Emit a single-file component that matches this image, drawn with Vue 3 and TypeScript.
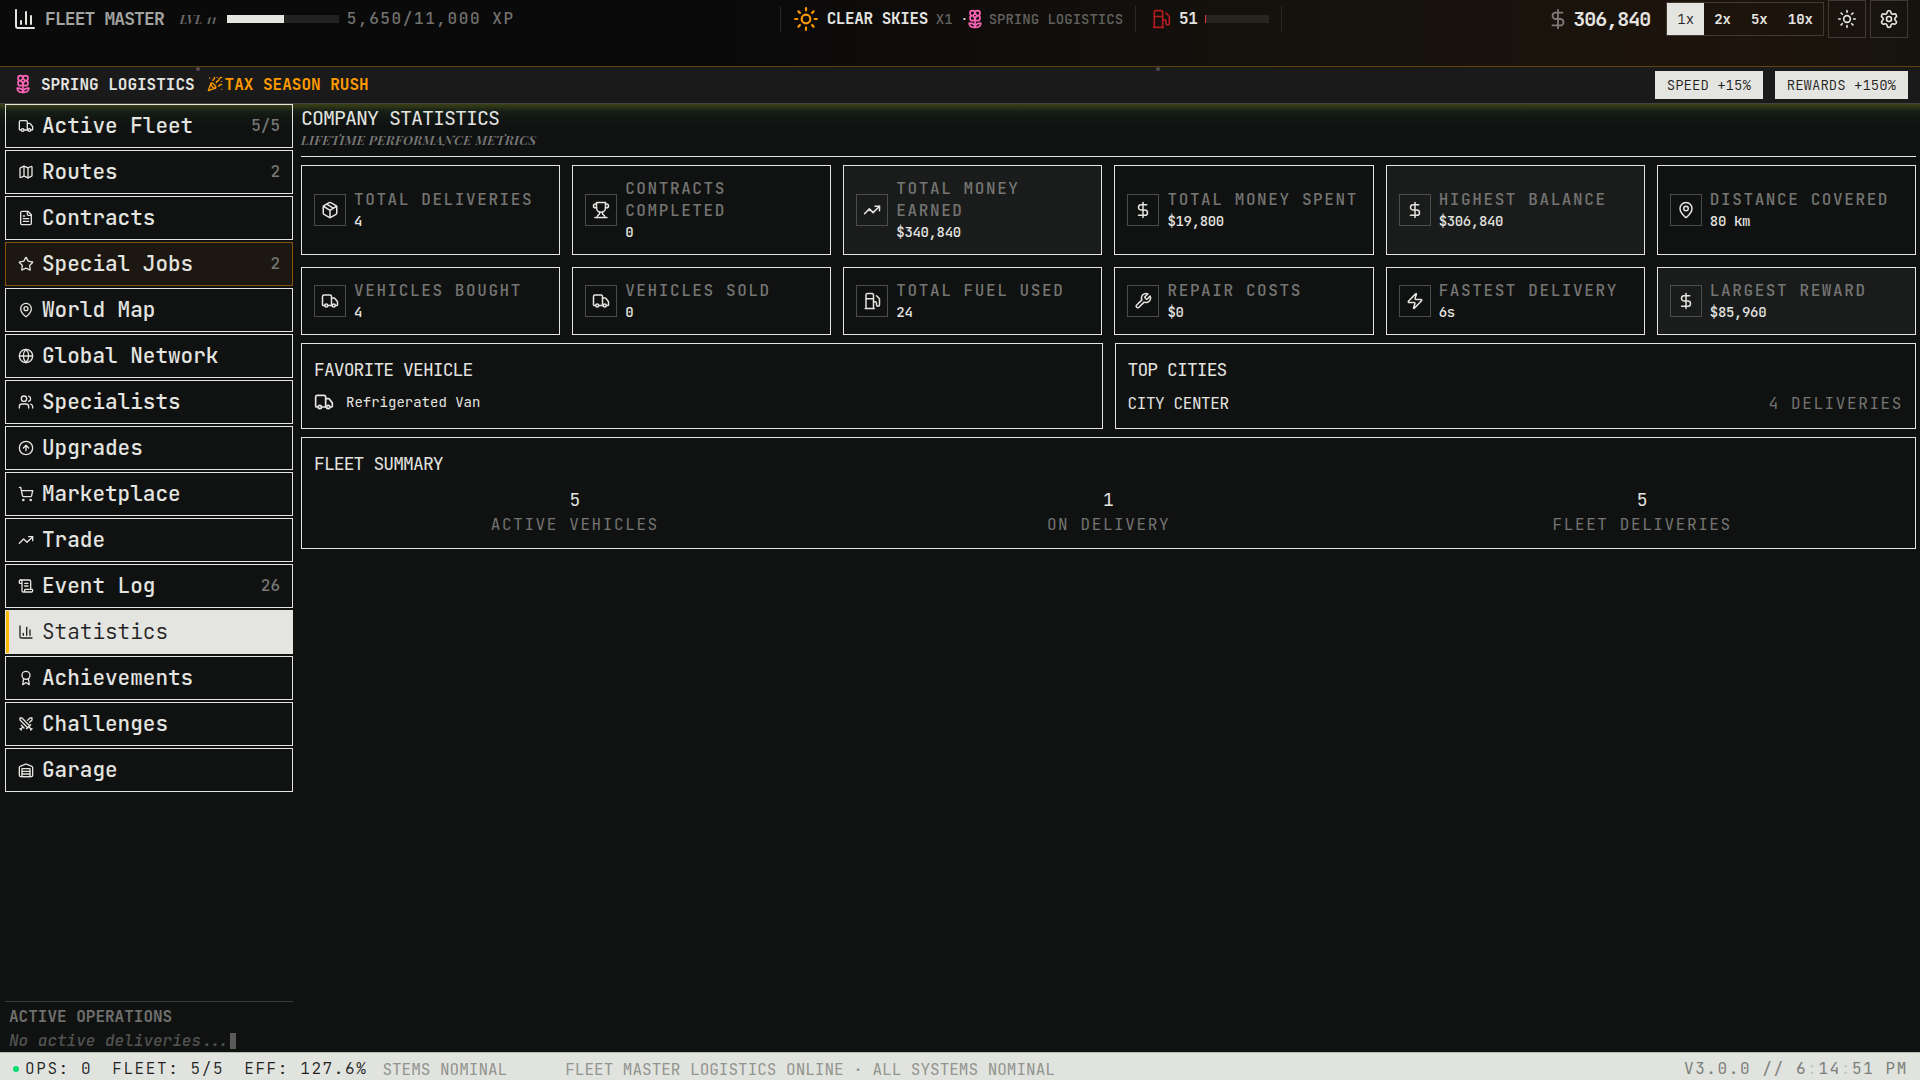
<script setup lang="ts">
import { h, ref, type FunctionalComponent } from 'vue'

const icons: Record<string, string[]> = {
  truck: [
    'M14 18V6a2 2 0 0 0-2-2H4a2 2 0 0 0-2 2v11a1 1 0 0 0 1 1h2',
    'M15 18H9',
    'M19 18h2a1 1 0 0 0 1-1v-3.65a1 1 0 0 0-.22-.624l-3.48-4.35A1 1 0 0 0 17.52 8H14',
    'M15 18a2 2 0 1 0 4 0a2 2 0 1 0-4 0',
    'M5 18a2 2 0 1 0 4 0a2 2 0 1 0-4 0',
  ],
  map: [
    'M14.106 5.553a2 2 0 0 0 1.788 0l3.659-1.83A1 1 0 0 1 21 4.619v12.764a1 1 0 0 1-.553.894l-4.553 2.277a2 2 0 0 1-1.788 0l-4.212-2.106a2 2 0 0 0-1.788 0l-3.659 1.83A1 1 0 0 1 3 19.381V6.618a1 1 0 0 1 .553-.894l4.553-2.277a2 2 0 0 1 1.788 0z',
    'M15 5.764v15',
    'M9 3.236v15',
  ],
  file: [
    'M15 2H6a2 2 0 0 0-2 2v16a2 2 0 0 0 2 2h12a2 2 0 0 0 2-2V7Z',
    'M14 2v4a2 2 0 0 0 2 2h4',
    'M10 9H8',
    'M16 13H8',
    'M16 17H8',
  ],
  star: [
    'M11.525 2.295a.53.53 0 0 1 .95 0l2.31 4.679a2.123 2.123 0 0 0 1.595 1.16l5.166.756a.53.53 0 0 1 .294.904l-3.736 3.638a2.123 2.123 0 0 0-.611 1.878l.882 5.14a.53.53 0 0 1-.771.56l-4.618-2.428a2.122 2.122 0 0 0-1.973 0L6.396 21.01a.53.53 0 0 1-.77-.56l.881-5.139a2.122 2.122 0 0 0-.611-1.879L2.16 9.795a.53.53 0 0 1 .294-.906l5.165-.755a2.122 2.122 0 0 0 1.597-1.16z',
  ],
  pin: [
    'M20 10c0 4.993-5.539 10.193-7.399 11.799a1 1 0 0 1-1.202 0C9.539 20.193 4 14.993 4 10a8 8 0 0 1 16 0',
    'M9 10a3 3 0 1 0 6 0a3 3 0 1 0-6 0',
  ],
  globe: [
    'M2 12a10 10 0 1 0 20 0a10 10 0 1 0-20 0',
    'M12 2a14.5 14.5 0 0 0 0 20 14.5 14.5 0 0 0 0-20',
    'M2 12h20',
  ],
  users: [
    'M16 21v-2a4 4 0 0 0-4-4H6a4 4 0 0 0-4 4v2',
    'M5 7a4 4 0 1 0 8 0a4 4 0 1 0-8 0',
    'M22 21v-2a4 4 0 0 0-3-3.87',
    'M16 3.13a4 4 0 0 1 0 7.75',
  ],
  arrowUp: ['M2 12a10 10 0 1 0 20 0a10 10 0 1 0-20 0', 'm16 12-4-4-4 4', 'M12 16V8'],
  cart: [
    'M7 21a1 1 0 1 0 2 0a1 1 0 1 0-2 0',
    'M18 21a1 1 0 1 0 2 0a1 1 0 1 0-2 0',
    'M2.05 2.05h2l2.66 12.42a2 2 0 0 0 2 1.58h9.78a2 2 0 0 0 1.95-1.57l1.65-7.43H5.12',
  ],
  trend: ['M22 7 13.5 15.5 8.5 10.5 2 17', 'M16 7h6v6'],
  scroll: [
    'M15 12h-5',
    'M15 8h-5',
    'M19 17V5a2 2 0 0 0-2-2H4',
    'M8 21h12a2 2 0 0 0 2-2v-1a1 1 0 0 0-1-1H11a1 1 0 0 0-1 1v1a2 2 0 1 1-4 0V5a2 2 0 1 0-4 0v2a1 1 0 0 0 1 1h3',
  ],
  chart: ['M3 3v16a2 2 0 0 0 2 2h16', 'M18 17V9', 'M13 17V5', 'M8 17v-3'],
  award: [
    'm15.477 12.89 1.515 8.526a.5.5 0 0 1-.81.47l-3.58-2.687a1 1 0 0 0-1.197 0l-3.586 2.686a.5.5 0 0 1-.81-.469l1.514-8.526',
    'M6 8a6 6 0 1 0 12 0a6 6 0 1 0-12 0',
  ],
  swords: [
    'M14.5 17.5 3 6V3h3l11.5 11.5',
    'M13 19l6-6',
    'M16 16l4 4',
    'M19 21l2-2',
    'M14.5 6.5 18 3h3v3l-3.5 3.5',
    'M5 14l4 4',
    'M7 17l-3 3',
    'M3 19l2 2',
  ],
  warehouse: [
    'M22 8.35V20a2 2 0 0 1-2 2H4a2 2 0 0 1-2-2V8.35A2 2 0 0 1 3.26 6.5l8-3.2a2 2 0 0 1 1.48 0l8 3.2A2 2 0 0 1 22 8.35Z',
    'M6 18h12',
    'M6 14h12',
    'M6 10h12v12H6z',
  ],
  box: [
    'M11 21.73a2 2 0 0 0 2 0l7-4A2 2 0 0 0 21 16V8a2 2 0 0 0-1-1.73l-7-4a2 2 0 0 0-2 0l-7 4A2 2 0 0 0 3 8v8a2 2 0 0 0 1 1.73z',
    'M12 22V12',
    'm3.3 7 7.703 4.734a2 2 0 0 0 1.994 0L20.7 7',
    'm7.5 4.27 9 5.15',
  ],
  trophy: [
    'M6 9H4.5a2.5 2.5 0 0 1 0-5H6',
    'M18 9h1.5a2.5 2.5 0 0 0 0-5H18',
    'M4 22h16',
    'M10 14.66V17c0 .55-.47.98-.97 1.21C7.85 18.75 7 20.24 7 22',
    'M14 14.66V17c0 .55.47.98.97 1.21C16.15 18.75 17 20.24 17 22',
    'M18 2H6v7a6 6 0 0 0 12 0V2Z',
  ],
  dollar: ['M12 2v20', 'M17 5H9.5a3.5 3.5 0 0 0 0 7h5a3.5 3.5 0 0 1 0 7H6'],
  fuel: [
    'M3 22h12',
    'M4 9h10',
    'M14 22V4a2 2 0 0 0-2-2H6a2 2 0 0 0-2 2v18',
    'M14 13h2a2 2 0 0 1 2 2v2a2 2 0 0 0 2 2a2 2 0 0 0 2-2V9.83a2 2 0 0 0-.59-1.42L18 5',
  ],
  wrench: [
    'M14.7 6.3a1 1 0 0 0 0 1.4l1.6 1.6a1 1 0 0 0 1.4 0l3.77-3.77a6 6 0 0 1-7.94 7.94l-6.91 6.91a2.12 2.12 0 0 1-3-3l6.91-6.91a6 6 0 0 1 7.94-7.94l-3.76 3.76z',
  ],
  zap: [
    'M4 14a1 1 0 0 1-.78-1.63l9.9-10.2a.5.5 0 0 1 .86.46l-1.92 6.02A1 1 0 0 0 13 10h7a1 1 0 0 1 .78 1.63l-9.9 10.2a.5.5 0 0 1-.86-.46l1.92-6.02A1 1 0 0 0 11 14z',
  ],
  sun: [
    'M8 12a4 4 0 1 0 8 0a4 4 0 1 0-8 0',
    'M12 2v2',
    'M12 20v2',
    'm4.93 4.93 1.41 1.41',
    'm17.66 17.66 1.41 1.41',
    'M2 12h2',
    'M20 12h2',
    'm6.34 17.66-1.41 1.41',
    'm19.07 4.93-1.41 1.41',
  ],
  gear: [
    'M9.671 4.136a2.34 2.34 0 0 1 4.659 0 2.34 2.34 0 0 0 3.319 1.915 2.34 2.34 0 0 1 2.33 4.033 2.34 2.34 0 0 0 0 3.831 2.34 2.34 0 0 1-2.33 4.033 2.34 2.34 0 0 0-3.319 1.915 2.34 2.34 0 0 1-4.659 0 2.34 2.34 0 0 0-3.32-1.915 2.34 2.34 0 0 1-2.33-4.033 2.34 2.34 0 0 0 0-3.831A2.34 2.34 0 0 1 6.35 6.051a2.34 2.34 0 0 0 3.319-1.915',
    'M9 12a3 3 0 1 0 6 0a3 3 0 1 0-6 0',
  ],
  flower: [
    'M12 5a3 3 0 1 1 3 3m-3-3a3 3 0 1 0-3 3m3-3v1M9 8a3 3 0 1 0 3 3M9 8h1m5 0a3 3 0 1 1-3 3m3-3h-1m-2 3v-1',
    'M10 8a2 2 0 1 0 4 0a2 2 0 1 0-4 0',
    'M12 10v12',
    'M12 22c4.2 0 7-1.667 7-5-4.2 0-7 1.667-7 5Z',
    'M12 22c-4.2 0-7-1.667-7-5 4.2 0 7 1.667 7 5Z',
  ],
  party: [
    'M5.8 11.3 2 22l10.7-3.79',
    'M4 3h.01',
    'M22 8h.01',
    'M15 2h.01',
    'M22 20h.01',
    'm22 2-2.24.75a2.9 2.9 0 0 0-1.96 3.12c.1.86-.57 1.63-1.45 1.63h-.38c-.86 0-1.6.6-1.76 1.44L14 10',
    'm22 13-.82-.33c-.86-.34-1.82.2-1.98 1.11c-.11.7-.72 1.22-1.43 1.22H17',
    'm11 2 .33.82c.34.86-.2 1.82-1.11 1.98C9.52 4.9 9 5.52 9 6.23V7',
    'M11 13c1.93 1.93 2.83 4.17 2 5-.83.83-3.07-.07-5-2-1.93-1.93-2.83-4.17-2-5 .83-.83 3.07.07 5 2Z',
  ],
}

const Icon: FunctionalComponent<{ name: string; size: number }> = (props) =>
  h(
    'svg',
    {
      width: props.size,
      height: props.size,
      viewBox: '0 0 24 24',
      fill: 'none',
      stroke: 'currentColor',
      'stroke-width': 2,
      'stroke-linecap': 'round',
      'stroke-linejoin': 'round',
      'aria-hidden': 'true',
    },
    icons[props.name].map((d) => h('path', { d })),
  )
Icon.props = ['name', 'size']

interface NavItem {
  label: string
  icon: string
  count?: string
  special?: boolean
}

const navItems: NavItem[] = [
  { label: 'Active Fleet', icon: 'truck', count: '5/5' },
  { label: 'Routes', icon: 'map', count: '2' },
  { label: 'Contracts', icon: 'file' },
  { label: 'Special Jobs', icon: 'star', count: '2', special: true },
  { label: 'World Map', icon: 'pin' },
  { label: 'Global Network', icon: 'globe' },
  { label: 'Specialists', icon: 'users' },
  { label: 'Upgrades', icon: 'arrowUp' },
  { label: 'Marketplace', icon: 'cart' },
  { label: 'Trade', icon: 'trend' },
  { label: 'Event Log', icon: 'scroll', count: '26' },
  { label: 'Statistics', icon: 'chart' },
  { label: 'Achievements', icon: 'award' },
  { label: 'Challenges', icon: 'swords' },
  { label: 'Garage', icon: 'warehouse' },
]

const stats = [
  { label: 'TOTAL DELIVERIES', value: '4', icon: 'box', lit: false },
  { label: 'CONTRACTS COMPLETED', value: '0', icon: 'trophy', lit: false },
  { label: 'TOTAL MONEY EARNED', value: '$340,840', icon: 'trend', lit: true },
  { label: 'TOTAL MONEY SPENT', value: '$19,800', icon: 'dollar', lit: false },
  { label: 'HIGHEST BALANCE', value: '$306,840', icon: 'dollar', lit: true },
  { label: 'DISTANCE COVERED', value: '80 km', icon: 'pin', lit: false },
  { label: 'VEHICLES BOUGHT', value: '4', icon: 'truck', lit: false },
  { label: 'VEHICLES SOLD', value: '0', icon: 'truck', lit: false },
  { label: 'TOTAL FUEL USED', value: '24', icon: 'fuel', lit: false },
  { label: 'REPAIR COSTS', value: '$0', icon: 'wrench', lit: false },
  { label: 'FASTEST DELIVERY', value: '6s', icon: 'zap', lit: false },
  { label: 'LARGEST REWARD', value: '$85,960', icon: 'dollar', lit: true },
]

const summary = [
  { value: 5, label: 'ACTIVE VEHICLES' },
  { value: 1, label: 'ON DELIVERY' },
  { value: 5, label: 'FLEET DELIVERIES' },
]

const speeds = [1, 2, 5, 10]
const speed = ref(1)
const activeTab = ref('Statistics')
const xp = 5650
const xpGoal = 11000
const fuelPercent = 1
</script>

<template>
  <div class="app">
    <header class="topbar">
      <div class="topbar-row">
        <div class="group brand-group">
          <Icon name="chart" :size="24" />
          <span class="brand">FLEET MASTER</span>
          <span class="level">LVL 11</span>
          <div class="meter meter-xp"><div class="meter-fill" :style="{ width: (xp / xpGoal) * 100 + '%' }"></div></div>
          <span class="xp">5,650/11,000 XP</span>
        </div>

        <div class="group conditions">
          <div class="group weather">
            <Icon class="amber" name="sun" :size="26" />
            <span class="weather-name">CLEAR SKIES</span>
            <span class="faint">X1</span>
            <span class="season"><span class="sep">·</span><Icon class="pink" name="flower" :size="20" /><span class="faint">SPRING LOGISTICS</span></span>
          </div>
          <div class="group fuel">
            <Icon class="red" name="fuel" :size="20" />
            <span class="fuel-value">51</span>
            <div class="meter meter-fuel"><div class="meter-fill low" :style="{ width: fuelPercent + '%' }"></div></div>
          </div>
        </div>

        <div class="group controls">
          <span class="money"><Icon class="money-icon" name="dollar" :size="22" />306,840</span>
          <div class="speeds">
            <button v-for="s in speeds" :key="s" type="button" :class="{ on: s === speed }" @click="speed = s">{{ s }}x</button>
          </div>
          <div class="tools">
            <button type="button" aria-label="Toggle theme"><Icon name="sun" :size="20" /></button>
            <button type="button" aria-label="Settings"><Icon name="gear" :size="20" /></button>
          </div>
        </div>
      </div>
    </header>

    <section class="eventbar">
      <div class="group event-left">
        <Icon class="pink" name="flower" :size="20" />
        <span class="event-season">SPRING LOGISTICS</span>
        <span class="event-rush"><Icon name="party" :size="16" />TAX SEASON RUSH</span>
      </div>
      <div class="bonuses">
        <span>SPEED +15%</span>
        <span>REWARDS +150%</span>
      </div>
      <i class="petal petal-a"></i>
      <i class="petal petal-b"></i>
    </section>

    <div class="body">
      <aside class="sidebar">
        <nav>
          <button
            v-for="item in navItems"
            :key="item.label"
            type="button"
            class="nav-item"
            :class="{ special: item.special, active: item.label === activeTab }"
            @click="activeTab = item.label"
          >
            <Icon :name="item.icon" :size="16" />
            <span class="nav-label">{{ item.label }}</span>
            <span v-if="item.count" class="nav-count">{{ item.count }}</span>
          </button>
        </nav>
        <section class="ops">
          <h2>ACTIVE OPERATIONS</h2>
          <p>No active deliveries...<i class="cursor"></i></p>
        </section>
      </aside>

      <main class="main">
        <div class="page-head">
          <h1>COMPANY STATISTICS</h1>
          <p>LIFETIME PERFORMANCE METRICS</p>
        </div>

        <div class="stat-grid">
          <article v-for="s in stats" :key="s.label" class="stat" :class="{ lit: s.lit }">
            <div class="stat-icon"><Icon :name="s.icon" :size="18" /></div>
            <div>
              <div class="label">{{ s.label }}</div>
              <div class="stat-value">{{ s.value }}</div>
            </div>
          </article>
        </div>

        <div class="pair">
          <section class="panel">
            <h2>FAVORITE VEHICLE</h2>
            <div class="favorite"><Icon name="truck" :size="20" />Refrigerated Van</div>
          </section>
          <section class="panel">
            <h2>TOP CITIES</h2>
            <div class="city"><span class="city-name">CITY CENTER</span><span class="label">4 DELIVERIES</span></div>
          </section>
        </div>

        <section class="panel">
          <h2>FLEET SUMMARY</h2>
          <div class="summary">
            <div v-for="s in summary" :key="s.label">
              <div class="summary-value">{{ s.value }}</div>
              <div class="label">{{ s.label }}</div>
            </div>
          </div>
        </section>
      </main>
    </div>

    <footer class="statusbar">
      <span class="online"></span>
      <div class="readouts">
        <span>OPS: 0</span>
        <span>FLEET: 5/5</span>
        <span>EFF: 127.6%</span>
      </div>
      <div class="ticker">
        <span>STEMS NOMINAL</span>
        <span>FLEET MASTER LOGISTICS ONLINE · ALL SYSTEMS NOMINAL</span>
      </div>
      <span class="version">V3.0.0 // 6<b>:</b>14<b>:</b>51 PM</span>
    </footer>
  </div>
</template>

<style>
body {
  margin: 0;
  background: #101211;
}
</style>

<style scoped>
.app {
  display: flex;
  flex-direction: column;
  min-height: 100vh;
  background: #101211;
  color: #e4e4e0;
  font-family: 'JetBrains Mono', 'DejaVu Sans Mono', monospace;
  font-size: 16px;
}
.app * {
  box-sizing: border-box;
}
h1,
h2,
p {
  margin: 0;
  font-weight: 400;
}
button {
  margin: 0;
  font: inherit;
  color: inherit;
  background: none;
  border: 0;
  cursor: pointer;
}
svg {
  display: block;
  flex: none;
}
.group {
  display: flex;
  align-items: center;
}
.amber { color: #fe9a00; }
.pink { color: #fb64b6; }
.red { color: #b01c1f; }
.faint {
  color: #62615f;
  font-size: 14px;
  font-weight: 500;
}

.topbar {
  height: 67px;
  padding: 0 12px 0 13px;
  border-bottom: 1px solid #5c430c;
  background: linear-gradient(90deg, #0a0a0a 0%, #0b0a0a 38%, #15120d 68%, #1d140c 91%, #16130e 100%);
}
.topbar-row {
  display: flex;
  align-items: center;
  justify-content: space-between;
  height: 38px;
}
.brand {
  margin-left: 8px;
  padding-bottom: 2px;
  font-size: 18px;
  font-weight: 700;
  letter-spacing: -0.05em;
  color: #a3a3a1;
}
.level {
  margin: 0 10px 0 16px;
  font: italic 700 12px 'Playfair Display', 'Liberation Serif', serif;
  letter-spacing: 0.05em;
  color: #6a6a68;
}
.meter {
  height: 8px;
  background: #222;
}
.meter-xp { width: 112px; }
.meter-fuel {
  width: 64px;
  background: #282520;
}
.meter-fill {
  height: 100%;
  background: #e4e4e0;
}
.meter-fill.low {
  background: #d9373c;
}
.xp {
  margin-left: 8px;
  line-height: 20px;
  font-weight: 500;
  letter-spacing: 0.1em;
  color: #72726f;
}
.weather {
  gap: 8px;
  height: 26px;
  padding: 0 12px;
  border-left: 1px solid #282725;
  border-right: 1px solid #282725;
}
.weather-name {
  padding-bottom: 2px;
  font-weight: 700;
  letter-spacing: -0.025em;
}
.season {
  display: flex;
  align-items: center;
}
.sep {
  width: 4px;
  font-size: 12px;
}
.season .pink { margin-right: 4px; }
.fuel {
  gap: 8px;
  height: 26px;
  padding: 0 12px 0 15px;
  border-right: 1px solid #282725;
}
.fuel-value {
  padding-bottom: 2px;
  font-weight: 700;
  letter-spacing: -0.025em;
}
.controls { gap: 16px; }
.money {
  display: flex;
  align-items: center;
  gap: 4px;
  font-size: 20px;
  line-height: 26px;
  font-weight: 700;
  letter-spacing: -0.05em;
}
.money-icon { color: #7d7a76; }
.speeds {
  display: flex;
  height: 34px;
  border: 1px solid #3f3a34;
}
.speeds button {
  padding: 0 10px;
  font-size: 14px;
  font-weight: 700;
}
.speeds button.on {
  background: #e4e4e0;
  color: #222;
  font-weight: 300;
}
.tools {
  display: flex;
  gap: 4px;
  margin-left: -12px;
}
.tools button {
  display: flex;
  align-items: center;
  justify-content: center;
  width: 38px;
  height: 38px;
  padding: 0;
  border: 1px solid #3f3a34;
}

.eventbar {
  position: relative;
  display: flex;
  align-items: center;
  justify-content: space-between;
  height: 37px;
  padding: 0 12px 0 13px;
  background: #1a1a1a;
  border-bottom: 1px solid #43433f;
}
.event-left { padding-bottom: 2px; }
.event-season {
  margin: 0 12px 0 8px;
  font-weight: 700;
}
.event-rush {
  display: flex;
  align-items: center;
  gap: 2px;
  font-weight: 700;
  color: #fe9a00;
}
.bonuses {
  display: flex;
  gap: 12px;
}
.bonuses span {
  padding: 0 12px;
  font-size: 14px;
  font-weight: 300;
  line-height: 28px;
  background: #e4e4e0;
  color: #222;
}
.petal {
  position: absolute;
  top: 0;
  width: 4px;
  height: 4px;
  border-radius: 50%;
  background: #5e4a54;
}
.petal-a { left: 10.2%; }
.petal-b {
  left: 60.2%;
  background: #4c4850;
}

.body {
  flex: 1;
  display: flex;
  gap: 8px;
  padding: 0 4px 0 5px;
  background: linear-gradient(#3b4014 0, #2b3316 3px, #172017 7px, #111613 14px, #101211 24px);
}
.sidebar {
  display: flex;
  flex-direction: column;
  justify-content: space-between;
  flex: none;
  width: 288px;
}
nav {
  display: flex;
  flex-direction: column;
  gap: 2px;
}
.nav-item {
  display: flex;
  align-items: center;
  gap: 8px;
  height: 44px;
  padding: 0 12px;
  border: 1px solid #e4e4e0;
  text-align: left;
}
.nav-label,
.nav-count {
  padding-bottom: 2px;
  font-weight: 500;
}
.nav-label {
  flex: 1;
  font-size: 21px;
}
.nav-count { color: #777775; }
.nav-item.special {
  border-color: #8a5300;
  background: #1c1710;
}
.nav-item.active {
  background: #e4e4e0;
  color: #222;
  box-shadow: inset 3px 0 #ffb900;
}
.nav-item.active .nav-label { font-weight: 300; }
.ops {
  padding: 3px 4px 0;
  border-top: 1px solid #3a3b3a;
}
.ops h2 {
  font-size: 16px;
  font-weight: 700;
  line-height: 24px;
  color: #6f6f6d;
}
.ops p {
  display: flex;
  align-items: center;
  line-height: 23px;
  font-style: italic;
  font-weight: 500;
  color: #525351;
}
.cursor {
  width: 6px;
  height: 16px;
  background: #5a5b59;
}

.main {
  flex: 1;
  min-width: 0;
  display: flex;
  flex-direction: column;
  gap: 8px;
}
.page-head {
  padding-bottom: 8px;
  border-bottom: 1px solid #e4e4e0;
}
.page-head h1 {
  font-size: 20px;
  line-height: 28px;
  letter-spacing: -0.05em;
}
.page-head p {
  font: italic 600 13px/16px 'Playfair Display', 'Liberation Serif', serif;
  letter-spacing: 0.025em;
  color: #7a7b79;
}
.stat-grid {
  display: grid;
  grid-template-columns: repeat(6, minmax(0, 1fr));
  gap: 12px;
}
.stat {
  display: flex;
  align-items: center;
  gap: 8px;
  padding: 12px;
  border: 1px solid #e4e4e0;
}
.stat.lit { background: #1a1c1b; }
.stat-icon {
  display: flex;
  align-items: center;
  justify-content: center;
  flex: none;
  width: 32px;
  height: 32px;
  border: 1px solid #4b4c4b;
}
.label {
  font-size: 16px;
  font-weight: 500;
  line-height: 22px;
  letter-spacing: 0.1em;
  color: #757573;
}
.stat-value {
  font-size: 14px;
  font-weight: 500;
  line-height: 20px;
  letter-spacing: -0.025em;
}
.pair {
  display: grid;
  grid-template-columns: 1fr 1fr;
  gap: 12px;
}
.panel {
  padding: 12px;
  border: 1px solid #e4e4e0;
}
.panel h2 {
  margin-bottom: 8px;
  font-size: 18px;
  line-height: 28px;
  letter-spacing: -0.05em;
}
.favorite {
  display: flex;
  align-items: center;
  gap: 12px;
  font-size: 14px;
  line-height: 20px;
}
.city {
  display: flex;
  justify-content: space-between;
  padding-top: 1px;
  padding-bottom: 1px;
  line-height: 22px;
}
.city-name { letter-spacing: -0.025em; }
.city .label,
.summary .label { font-weight: 400; }
.summary {
  display: grid;
  grid-template-columns: repeat(3, 1fr);
  gap: 12px;
  text-align: center;
}
.summary-value {
  font-size: 18px;
  line-height: 28px;
}

.statusbar {
  display: flex;
  align-items: center;
  height: 28px;
  padding: 4px 12px 0;
  background: #e1e3de;
  color: #222;
  border-top: 1px solid #b5b7b3;
  white-space: nowrap;
}
.online {
  width: 6px;
  height: 6px;
  margin: 0 6px 0 1px;
  border-radius: 50%;
  background: #05df72;
}
.readouts {
  display: flex;
  gap: 20px;
  font-weight: 300;
  letter-spacing: 0.1em;
}
.ticker {
  flex: 1;
  display: flex;
  gap: 58px;
  min-width: 0;
  margin-left: 15px;
  padding-top: 1px;
  overflow: hidden;
  color: #92948f;
}
.version {
  letter-spacing: 0.1em;
  color: #7c7e7a;
}
.version b {
  font-weight: 400;
  color: #c4c6c1;
}
</style>
